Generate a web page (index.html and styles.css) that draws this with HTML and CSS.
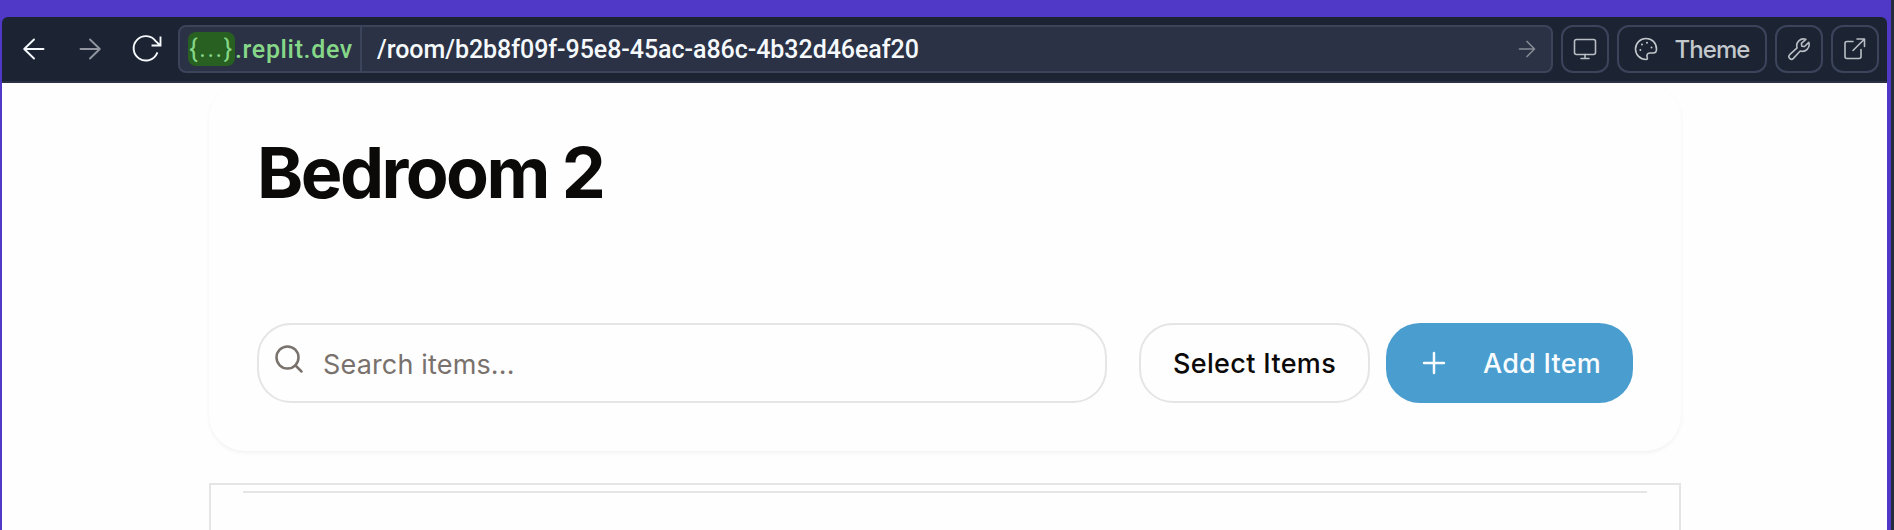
FILE: index.html
```html
<!DOCTYPE html>
<html lang="en">
<head>
<meta charset="utf-8">
<title>Bedroom 2</title>
<link rel="stylesheet" href="styles.css">
</head>
<body>
<div class="window">
  <header class="toolbar">
    <nav class="nav">
      <svg class="nav-icon" viewBox="0 0 24 24"><path d="M21.500 12H2.200M12 2.500 2.200 12l9.800 9.500"/></svg>
      <svg class="nav-icon muted" viewBox="0 0 24 24"><path d="M2.500 12h19.300M12 2.500l9.800 9.500-9.800 9.500"/></svg>
      <svg class="reload-icon" viewBox="0 0 32 32"><path d="M29.500 4.500v8h-8M29 12.200l-4.300-4.100A12.200 12.200 0 1 0 26 20.300"/></svg>
    </nav>
    <div class="address">
      <div class="host"><span class="badge"><span class="braces">{...}</span></span><span class="domain">.replit.dev</span></div>
      <div class="path"><span class="path-text">/room/b2b8f09f-95e8-45ac-a86c-4b32d46eaf20</span>
        <svg class="go" viewBox="0 0 24 24"><path d="M3 12h18M12 3l9 9-9 9"/></svg>
      </div>
    </div>
    <button class="tool"><svg viewBox="0 0 24 24"><rect x="1.500" y="2.500" width="21" height="15" rx="2"/><path d="M12 17.500v4M8 21.500h8"/></svg></button>
    <button class="tool theme"><svg viewBox="0 0 24 24"><path d="M12 1.500a10.500 10.500 0 1 0 0 21c1.300 0 1.700-1.100 1.200-2.200-.9-2.200.2-4.300 2.600-4.300h3.400c2 0 3.300-1.200 3.300-3.800C22.500 5.700 17.800 1.500 12 1.500Z"/><g class="dots"><circle cx="6.400" cy="13" r="1"/><circle cx="8" cy="7.500" r="1"/><circle cx="13" cy="5.700" r="1"/><circle cx="17.500" cy="10.500" r="1"/></g></svg><span>Theme</span></button>
    <button class="tool"><svg viewBox="0 0 24 24"><path d="M18.800 2.300a6.800 6.800 0 0 0-8.700 8.600L2.700 17.700a2.600 2.600 0 0 0 3.700 3.700l6.800-7.400a6.800 6.800 0 0 0 8.600-8.600l-4.300 4.100-2.700-.3-.4-2.800 4.400-4.100Z"/></svg></button>
    <button class="tool"><svg viewBox="0 0 24 24"><path d="M10 4.500H4a2 2 0 0 0-2 2v13a2 2 0 0 0 2 2h12a2 2 0 0 0 2-2v-7M14 2h7.500v7.500M21.500 2 10 13.500"/></svg></button>
  </header>
  <main class="page">
    <section class="card">
      <h1 class="title">Bedroom 2</h1>
      <div class="controls">
        <label class="search"><svg viewBox="0 0 32 32"><circle cx="14.500" cy="14.500" r="11"/><path d="m22.500 22.500 6 6"/></svg><span>Search items...</span></label>
        <button class="select"><span>Select Items</span></button>
        <button class="add"><svg viewBox="0 0 24 24"><path d="M12 2.800v18.400M2.800 12h18.400"/></svg><span>Add Item</span></button>
      </div>
    </section>
    <section class="list"><div class="rule"></div></section>
  </main>
</div>
</body>
</html>
```
FILE: styles.css
```css
* { box-sizing: border-box; }
body {
  margin: 0;
  height: 530px;
  overflow: hidden;
  background: #4f39c6;
  border-right: 3px solid #262b3e;
  font-family: Inter, "Liberation Sans", sans-serif;
}
svg { fill: none; stroke: currentColor; stroke-linecap: round; stroke-linejoin: round; flex: none; display: block; }
button { margin: 0; padding: 0; font-family: inherit; background: none; white-space: nowrap; }
.window { height: 530px; padding: 17px 4px 0 2px; }
.toolbar {
  display: flex;
  gap: 8px;
  height: 66px;
  padding: 8px 8px 8px 20px;
  background: #1c2333;
  border-bottom: 2px solid #2b3245;
  border-radius: 6px 6px 0 0;
}
.nav { display: flex; align-items: center; gap: 32px; width: 148px; flex: none; color: #f5f9fc; }
.nav-icon { width: 24px; height: 24px; stroke-width: 1.9; }
.muted { color: #9095a0; }
.reload-icon { width: 32px; height: 32px; margin-left: -3px; stroke-width: 1.900; stroke-linecap: square; stroke-linejoin: miter; }
.address {
  display: flex;
  flex: 1;
  height: 48px;
  border: 2px solid #3c445c;
  border-radius: 8px;
  background: #2b3245;
  font-family: Roboto, sans-serif;
  font-size: 25px;
  line-height: 44px;
  white-space: nowrap;
}
.host { display: flex; align-items: center; width: 182px; padding-left: 8px; border-right: 2px solid #3c445c; color: #86d788; }
.badge { width: 47px; height: 34px; border-radius: 8px; background: #276020; line-height: 34px; text-align: center; }
.braces { letter-spacing: 1.6px; }
.domain { padding-top: 2px; letter-spacing: .65px; font-weight: 500; }
.path { display: flex; flex: 1; align-items: center; justify-content: space-between; padding: 0 14px 0 15px; color: #f5f9fc; }
.path-text { padding-top: 2px; letter-spacing: -.05px; font-weight: 500; }
.go { width: 20px; height: 20px; stroke-width: 2; color: #858a94; }
.tool {
  display: flex;
  align-items: center;
  justify-content: center;
  width: 48px;
  height: 48px;
  flex: none;
  border: 2px solid #3c445c;
  border-radius: 12px;
  color: #b9bec5;
}
.tool svg { width: 24px; height: 24px; stroke-width: 1.6; }
.tool .dots { fill: currentColor; stroke: none; }
.theme { width: 150px; gap: 16px; font-size: 24px; font-weight: 500; letter-spacing: -.9px; color: #c2c8cc; }
.page { height: 447px; padding: 0 206px 0 207px; overflow: hidden; background: #fefefe; }
.card {
  height: 368px;
  padding: 48px;
  border-radius: 36px;
  background: #fefefe;
  box-shadow: 0 2px 4px rgba(0, 0, 0, .05);
}
.title { margin: 0; height: 192px; font-size: 70px; line-height: 84px; font-weight: 700; letter-spacing: -2.550px; color: #0c0a09; }
.controls { display: flex; height: 80px; }
.search {
  display: flex;
  align-items: center;
  width: 850px;
  margin-right: 32px;
  padding-left: 14px;
  border: 2px solid #e5e5e5;
  border-radius: 34px;
  gap: 18px;
  font-size: 27px;
  letter-spacing: .16px;
  color: #78716c;
}
.search svg { width: 32px; height: 32px; margin-top: -9px; stroke-width: 2.500; }
.search span { padding-top: 2px; }
.select { width: 231px; margin-right: 16px; border: 2px solid #e5e5e5; border-radius: 34px; font-size: 27px; font-weight: 500; letter-spacing: .35px; color: #0c0a09; }
.add { display: flex; align-items: center; width: 247px; padding-left: 35px; gap: 36px; border: 0; border-radius: 34px; background: #4a9dcf; color: #f8fcfe; font-size: 27px; font-weight: 500; letter-spacing: .25px; }
.add svg { width: 26px; height: 26px; stroke-width: 2.3; }
.list { height: 60px; margin-top: 32px; padding: 6px 32px; border: 2px solid #e5e5e5; border-bottom: 0; }
.rule { height: 2px; background: #e5e5e5; }
```
